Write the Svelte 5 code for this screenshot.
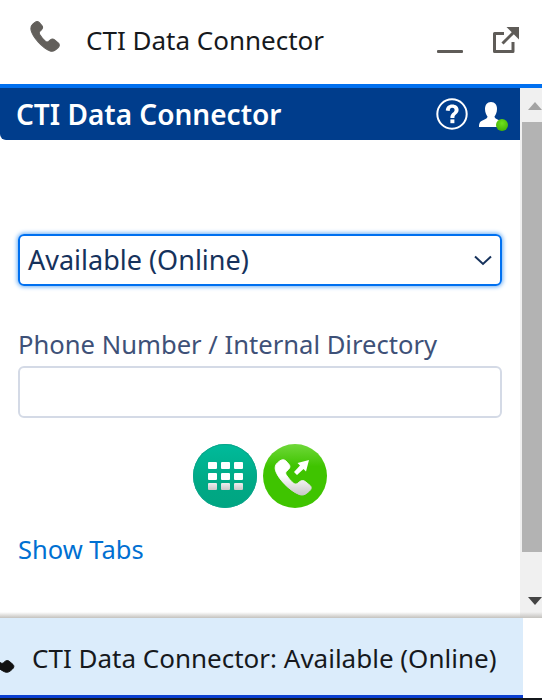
<script>
	let status = "Available (Online)"
	let phone = ""
	const keys = [1, 2, 3, 4, 5, 6, 7, 8, 9]
	const handset =
		"M6.6 1.2 C5.6 .2 4.2 .3 3 1.2 L1.6 2.4 C.2 3.6 -.2 5.4 .3 7.4 C1.6 12.4 8.6 20.4 14.6 23 C16.4 23.8 18 23.4 19.4 22.2 L21 20.8 C22.3 19.6 22.4 18.2 21.4 17.2 L18.4 14.6 C17.4 13.8 16.2 13.8 15.2 14.6 L13.8 15.8 C13 16.4 12.2 16.4 11.4 15.8 C9.6 14.2 8 12.2 6.8 10.2 C6.4 9.4 6.4 8.6 7 8 L8.2 6.8 C9.2 5.8 9.4 4.6 8.6 3.6 Z"
</script>

<div class="page">
	<header class="utility-header">
		<svg class="header-phone" viewBox="0 0 22 24" width="30" height="31"><path d={handset} fill="#625f5b" stroke="#625f5b" stroke-width="0.8" /></svg>
		<span class="header-title">CTI Data Connector</span>
		<span class="minimize"></span>
		<svg class="popout" viewBox="0 0 26 26" width="26" height="26" fill="none" stroke="#5f5c58" stroke-width="3">
			<path d="M11 6.5 H1.5 V24.5 H20 V15" stroke-linejoin="round" />
			<path d="M9.5 16.5 L21 5" />
			<path d="M13.5 0 H26 V12.5 Z" fill="#5f5c58" stroke="none" />
		</svg>
	</header>

	<div class="panel">
		<div class="content">
			<div class="softphone-bar">
				<h1>CTI Data Connector</h1>
				<svg class="help" viewBox="0 0 32 32" width="32" height="32">
					<circle cx="16" cy="16" r="14.7" fill="none" stroke="#fff" stroke-width="2" />
					<path d="M9.8 12.6 C10 8.6 12.6 6.4 16.2 6.4 C20 6.4 22.6 8.6 22.6 11.8 C22.6 16 18.4 16 18.4 20 H14.4 C14.2 14.8 18.6 14.8 18.6 12 C18.6 10.6 17.6 9.8 16.1 9.8 C14.6 9.8 13.8 10.8 13.7 12.9 Z" fill="#fff" />
					<rect x="14.4" y="21.4" width="4" height="3.8" fill="#fff" />
				</svg>
				<div class="agent">
					<svg viewBox="0 0 28 28" width="28" height="28">
						<path d="M14 1 C18 1 20 4 20 8 C20 11.5 18.6 14 17.5 15.5 C17.5 17 19 18 22 19.3 C25 20.5 25.5 22 25.5 26 H2 C2 22 3 20.5 6 19.3 C9 18 10.5 17 10.5 15.5 C9.4 14 8 11.5 8 8 C8 4 10 1 14 1 Z" fill="#fff" />
					</svg>
					<span class="presence"></span>
				</div>
			</div>

			<div class="form">
				<div class="select">
					<span>{status}</span>
					<svg viewBox="0 0 18 11" width="18" height="11" fill="none" stroke="#16325c" stroke-width="2"><path d="M1 1.5 L9 9 L17 1.5" /></svg>
				</div>

				<label for="phone">Phone Number / Internal Directory</label>
				<input id="phone" type="text" bind:value={phone} />

				<div class="actions">
					<button class="round dialpad" aria-label="Dial pad">
						<span class="keys">
							{#each keys as k (k)}
								<i></i>
							{/each}
						</span>
					</button>
					<button class="round call" aria-label="Call">
						<svg viewBox="0 0 44 44" width="44" height="44">
							<defs>
								<linearGradient id="shine" x1="0" y1="0" x2="0" y2="1">
									<stop offset="0.45" stop-color="#fff" />
									<stop offset="1" stop-color="#c8c8c8" />
								</linearGradient>
							</defs>
							<path transform="translate(2 5) scale(1.64 1.54)" d={handset} fill="url(#shine)" stroke="url(#shine)" stroke-width="0.6" />
							<path d="M36 6 L24.5 9 L27 11.5 L21 18 L24 21 L30.5 15 L33 17.5 Z" fill="#fff" />
						</svg>
					</button>
				</div>

				<a class="show-tabs" href="#tabs">Show Tabs</a>
			</div>
		</div>

		<div class="scrollbar">
			<span class="arrow up"></span>
			<span class="thumb"></span>
			<span class="arrow down"></span>
		</div>
	</div>

	<footer class="dock">
		<svg class="dock-phone" viewBox="0 0 22 24" width="30" height="30"><path d={handset} fill="#111" stroke="#111" stroke-width="0.8" /></svg>
		<span>CTI Data Connector: {status}</span>
	</footer>
	<div class="taskbar"></div>
</div>

<style>
	:global(body) {
		background: #fff;
	}
	.page {
		width: 542px;
		height: 700px;
		display: flex;
		flex-direction: column;
		overflow: hidden;
		font-family: "Noto Sans", "Open Sans", sans-serif;
	}
	.utility-header {
		height: 84px;
		flex: none;
		display: flex;
		align-items: center;
		padding: 0 23px 0 30px;
		box-sizing: border-box;
	}
	.header-phone {
		margin-top: -12px;
	}
	.header-title {
		margin-left: 26px;
		margin-top: -4px;
		font-size: 26px;
		color: #16191d;
		flex: 1;
	}
	.minimize {
		width: 26px;
		height: 3px;
		margin-top: 18px;
		margin-right: 30px;
		background: #5f5c58;
		border-radius: 1px;
	}
	.popout {
		margin-top: -4px;
	}
	.panel {
		flex: 1;
		min-height: 0;
		display: flex;
		border-top: 4px solid #0070f0;
	}
	.content {
		flex: 1;
		min-width: 0;
	}
	.softphone-bar {
		height: 52px;
		display: flex;
		align-items: center;
		padding: 0 15px 0 16px;
		background: #003d8c;
		border-radius: 0 0 0 6px;
		color: #fff;
	}
	h1 {
		flex: 1;
		margin: 0;
		font-size: 28px;
		font-weight: 600;
	}
	.agent {
		position: relative;
		width: 28px;
		height: 28px;
		margin-left: 9px;
		margin-top: 2px;
	}
	.presence {
		position: absolute;
		right: -3px;
		bottom: -2px;
		width: 12px;
		height: 12px;
		border-radius: 50%;
		background: radial-gradient(circle at 50% 35%, #6fe01c, #38a800);
	}
	.form {
		padding: 94px 18px 0 18px;
		display: flex;
		flex-direction: column;
	}
	.select {
		height: 52px;
		box-sizing: border-box;
		display: flex;
		align-items: center;
		justify-content: space-between;
		padding: 0 8px;
		border: 2px solid #0070f0;
		border-radius: 6px;
		box-shadow: 0 0 4px 1px #6eb0f5;
		font-size: 27px;
		line-height: 36px;
		color: #16325c;
	}
	label {
		margin-top: 41px;
		font-size: 25.6px;
		line-height: 36px;
		color: #3e5178;
	}
	input {
		margin-top: 3px;
		height: 52px;
		box-sizing: border-box;
		border: 2px solid #d4dae6;
		border-radius: 6px;
		background: #fff;
		outline: none;
	}
	.actions {
		margin-top: 26px;
		display: flex;
		justify-content: center;
		gap: 6px;
	}
	.round {
		width: 64px;
		height: 64px;
		padding: 0;
		border: none;
		border-radius: 50%;
		display: flex;
		align-items: center;
		justify-content: center;
	}
	.dialpad {
		background: linear-gradient(#00bb9b, #00a985 60%, #00a582);
		box-shadow: inset 0 0 0 1px #0aa58a;
	}
	.keys {
		display: grid;
		grid-template-columns: repeat(3, 9px);
		gap: 3.5px 4px;
	}
	.keys i {
		height: 7px;
		background: #fff;
		border-radius: 1px;
	}
	.keys i:nth-child(n + 7) {
		background: linear-gradient(#eee, #c8c8c8);
	}
	.call {
		background: linear-gradient(#70d83a 0, #3fc400 35%, #3fc400 100%);
	}
	.show-tabs {
		margin-top: 23px;
		font-size: 25.5px;
		line-height: 36px;
		color: #0070d2;
		text-decoration: none;
		align-self: flex-start;
	}
	.scrollbar {
		width: 22px;
		flex: none;
		background: #f0f0f0;
		display: flex;
		flex-direction: column;
		align-items: flex-end;
	}
	.thumb {
		width: 20px;
		height: 430px;
		flex: none;
		background: #b3b3b3;
	}
	.arrow {
		width: 0;
		height: 0;
		flex: none;
		border-left: 7px solid transparent;
		border-right: 7px solid transparent;
	}
	.arrow.up {
		margin: 14px 0 12px;
		border-bottom: 8px solid #a3a3a3;
	}
	.arrow.down {
		margin-top: 45px;
		border-top: 8px solid #444;
	}
	.dock {
		width: 523px;
		height: 80px;
		flex: none;
		box-sizing: border-box;
		position: relative;
		display: flex;
		align-items: center;
		padding: 2px 0 0 32px;
		background: #dbecfb;
		border-bottom: 3px solid #0a3fd0;
		font-size: 26px;
		color: #16191d;
	}
	.dock::before {
		content: "";
		position: absolute;
		left: 0;
		width: 542px;
		top: -6px;
		height: 6px;
		background: linear-gradient(rgba(196, 194, 190, 0), #c4c2be);
	}
	.dock-phone {
		position: absolute;
		left: -15px;
		top: 25px;
	}
	.taskbar {
		height: 2px;
		flex: none;
		background: #14181c;
	}
</style>
